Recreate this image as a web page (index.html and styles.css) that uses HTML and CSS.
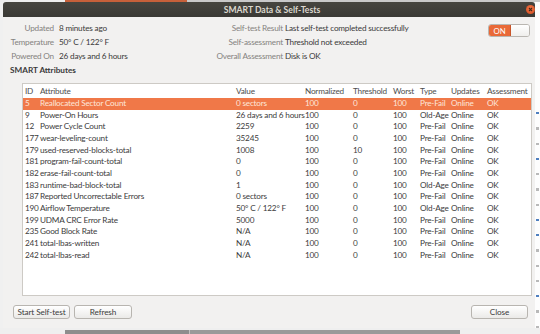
FILE: index.html
```html
<!DOCTYPE html>
<html>
<head>
<meta charset="utf-8">
<link rel="stylesheet" href="styles.css">
</head>
<body>
<div class="screen">
  <div class="top-strip">
    <div class="ts-a"></div><div class="ts-b"></div><div class="ts-c"></div>
  </div>
  <div class="middle">
    <div class="gutter"></div>
    <div class="window">
      <div class="titlebar">
        <span class="title">SMART Data &amp; Self-Tests</span>
        <span class="close-btn"><svg width="9" height="9" viewBox="0 0 9 9"><path d="M3 3L6 6M6 3L3 6" stroke="#4a2a1a" stroke-width="1.1"/></svg></span>
      </div>
      <div class="body">
        <div class="info">
          <div class="info-grid left">
            <span class="lbl">Updated</span><span class="val">8 minutes ago</span>
            <span class="lbl">Temperature</span><span class="val">50° C / 122° F</span>
            <span class="lbl">Powered On</span><span class="val">26 days and 6 hours</span>
          </div>
          <div class="info-grid right">
            <span class="lbl">Self-test Result</span><span class="val">Last self-test completed successfully</span>
            <span class="lbl">Self-assessment</span><span class="val">Threshold not exceeded</span>
            <span class="lbl">Overall Assessment</span><span class="val">Disk is OK</span>
          </div>
          <div class="switch"><span class="on">ON</span><span class="knob"></span></div>
        </div>
        <div class="section">SMART Attributes</div>
        <div class="table-box">
          <table class="attrs">
            <colgroup>
              <col class="c-id"><col class="c-attr"><col class="c-val"><col class="c-norm"><col class="c-thr"><col class="c-worst"><col class="c-type"><col class="c-upd"><col class="c-ass">
            </colgroup>
            <thead>
              <tr><th>ID</th><th>Attribute</th><th>Value</th><th>Normalized</th><th>Threshold</th><th>Worst</th><th>Type</th><th>Updates</th><th>Assessment</th></tr>
            </thead>
            <tbody>
              <tr class="sel"><td>5</td><td>Reallocated Sector Count</td><td>0 sectors</td><td>100</td><td>0</td><td>100</td><td>Pre-Fail</td><td>Online</td><td>OK</td></tr>
              <tr><td>9</td><td>Power-On Hours</td><td>26 days and 6 hours</td><td>100</td><td>0</td><td>100</td><td>Old-Age</td><td>Online</td><td>OK</td></tr>
              <tr><td>12</td><td>Power Cycle Count</td><td>2259</td><td>100</td><td>0</td><td>100</td><td>Pre-Fail</td><td>Online</td><td>OK</td></tr>
              <tr><td>177</td><td>wear-leveling-count</td><td>35245</td><td>100</td><td>0</td><td>100</td><td>Pre-Fail</td><td>Online</td><td>OK</td></tr>
              <tr><td>179</td><td>used-reserved-blocks-total</td><td>1008</td><td>100</td><td>10</td><td>100</td><td>Pre-Fail</td><td>Online</td><td>OK</td></tr>
              <tr><td>181</td><td>program-fail-count-total</td><td>0</td><td>100</td><td>0</td><td>100</td><td>Pre-Fail</td><td>Online</td><td>OK</td></tr>
              <tr><td>182</td><td>erase-fail-count-total</td><td>0</td><td>100</td><td>0</td><td>100</td><td>Pre-Fail</td><td>Online</td><td>OK</td></tr>
              <tr><td>183</td><td>runtime-bad-block-total</td><td>1</td><td>100</td><td>0</td><td>100</td><td>Old-Age</td><td>Online</td><td>OK</td></tr>
              <tr><td>187</td><td>Reported Uncorrectable Errors</td><td>0 sectors</td><td>100</td><td>0</td><td>100</td><td>Pre-Fail</td><td>Online</td><td>OK</td></tr>
              <tr><td>190</td><td>Airflow Temperature</td><td>50° C / 122° F</td><td>100</td><td>0</td><td>100</td><td>Old-Age</td><td>Online</td><td>OK</td></tr>
              <tr><td>199</td><td>UDMA CRC Error Rate</td><td>5000</td><td>100</td><td>0</td><td>100</td><td>Pre-Fail</td><td>Online</td><td>OK</td></tr>
              <tr><td>235</td><td>Good Block Rate</td><td>N/A</td><td>100</td><td>0</td><td>100</td><td>Pre-Fail</td><td>Online</td><td>OK</td></tr>
              <tr><td>241</td><td>total-lbas-written</td><td>N/A</td><td>100</td><td>0</td><td>100</td><td>Pre-Fail</td><td>Online</td><td>OK</td></tr>
              <tr><td>242</td><td>total-lbas-read</td><td>N/A</td><td>100</td><td>0</td><td>100</td><td>Pre-Fail</td><td>Online</td><td>OK</td></tr>
            </tbody>
          </table>
        </div>
        <div class="buttons">
          <button class="btn btn-start">Start Self-test</button>
          <button class="btn btn-refresh">Refresh</button>
          <span class="spacer"></span>
          <button class="btn btn-close">Close</button>
        </div>
      </div>
    </div>
    <div class="side">
      <i class="m b"></i><i class="m"></i><i class="m"></i><i class="m b"></i><i class="m"></i><i class="m"></i><i class="m"></i><i class="m b"></i><i class="m b"></i><i class="m"></i><i class="m"></i><i class="m"></i><i class="m b"></i><i class="m"></i><i class="m"></i>
    </div>
  </div>
  <div class="bottom-strip">
    <div class="bs-a"></div><div class="bs-b"></div><div class="bs-c"></div><div class="bs-d"></div>
  </div>
</div>
</body>
</html>
```
FILE: styles.css
```css
* { box-sizing: border-box; }
html, body { margin: 0; padding: 0; }
body {
  width: 540px;
  height: 334px;
  overflow: hidden;
  background: #f4f4f4;
  font-family: Lato, "Open Sans", "DejaVu Sans", sans-serif;
  font-size: 8.2px;
  letter-spacing: -0.2px;
  color: #3c3c3c;
}
.screen { display: flex; flex-direction: column; width: 540px; height: 334px; }

.top-strip { height: 2px; display: flex; background: #ededed; }
.ts-a { width: 65px; }
.ts-b { width: 122px; background: #c7603a; }
.ts-c { flex: 1; background: #c9c9c9; }

.middle { display: flex; height: 326px; }
.gutter { width: 3px; background: #f0f0f0; }
.window {
  width: 532px;
  display: flex;
  flex-direction: column;
  background: #f2f1f0;
}
.titlebar {
  height: 15px;
  background: linear-gradient(#46453f, #3a3935);
  display: flex;
  align-items: center;
  justify-content: center;
  position: relative;
  border-radius: 3px 3px 0 0;
}
.title {
  color: #dcd8cf;
  font-weight: bold;
  font-size: 8.6px;
  letter-spacing: 0;
  margin-left: 6px;
}
.close-btn {
  position: absolute;
  right: 0px;
  top: 3px;
  width: 9px;
  height: 9px;
  border-radius: 50%;
  background: radial-gradient(circle at 50% 40%, #f2794a, #d4481c);
  display: flex;
}

.body { flex: 1; display: flex; flex-direction: column; padding: 4px 4px 0 7px; }

.info { display: flex; height: 42px; position: relative; }
.info-grid {
  display: grid;
  grid-auto-rows: 14px;
  align-items: center;
}
.info-grid.left { width: 202px; grid-template-columns: 44px auto; column-gap: 5px; }
.info-grid.right { grid-template-columns: 71px auto; column-gap: 2px; }
.lbl { color: #85837f; text-align: right; white-space: nowrap; }
.val { color: #3a3a3a; white-space: nowrap; }

.switch {
  position: absolute;
  right: 1px;
  top: 3px;
  width: 42px;
  height: 13px;
  border: 1px solid #b9b6b1;
  border-radius: 3px;
  display: flex;
  overflow: hidden;
  background: #fbfbfa;
}
.switch .on {
  width: 22px;
  background: #e96937;
  color: #fff;
  font-size: 7.8px;
  letter-spacing: 0;
  display: flex;
  align-items: center;
  justify-content: center;
  border-right: 1px solid #c85529;
}
.switch .knob { flex: 1; background: linear-gradient(#ffffff, #efeeec); }

.section { height: 14px; line-height: 14px; font-weight: bold; color: #3a3a3a; letter-spacing: 0; }

.table-box {
  margin: 6px 0 0 12px;
  width: 510px;
  height: 213px;
  background: #fff;
  border: 1px solid #cdcac5;
  overflow: hidden;
}
.attrs { border-collapse: collapse; table-layout: fixed; width: 508px; }
.c-id { width: 15px; }
.c-attr { width: 196px; }
.c-val { width: 69px; }
.c-norm { width: 48px; }
.c-thr { width: 40px; }
.c-worst { width: 27px; }
.c-type { width: 31px; }
.c-upd { width: 36px; }
.c-ass { width: 46px; }
.attrs th, .attrs td {
  padding: 0 0 0 2px;
  text-align: left;
  white-space: nowrap;
  overflow: visible;
  font-weight: normal;
}
.attrs th { height: 14px; color: #4d4d4d; }
.attrs td { height: 11.67px; line-height: 11.67px; color: #3c3c3c; }
.attrs tr.sel td { background: #f07848; color: #fde6d9; }

.buttons { display: flex; align-items: center; margin-top: 9px; gap: 4px; padding-left: 3px; padding-right: 3px; }
.spacer { flex: 1; }
.btn {
  height: 14px;
  padding: 0;
  font-family: inherit;
  font-size: 8.2px;
  letter-spacing: -0.1px;
  color: #3c3c3c;
  border: 1px solid #b8b5b0;
  border-radius: 3px;
  background: linear-gradient(#ffffff, #ebeae8);
  display: flex;
  align-items: center;
  justify-content: center;
}
.btn-start { width: 57px; }
.btn-refresh { width: 58px; }
.btn-close { width: 57px; }

.side {
  width: 5px;
  background: #fdfdfd;
  display: flex;
  flex-direction: column;
  gap: 13px;
  padding-top: 110px;
  padding-left: 1px;
  overflow: hidden;
}
.side .m { display: block; width: 3px; height: 4px; background: #b9b9b9; }
.side .m.b { background: #4f7fbf; }

.bottom-strip { flex: 1; display: flex; background: #efefef; padding-top: 2px; }
.bs-a { width: 65px; }
.bs-b { width: 124px; background: #8d8d8d; }
.bs-c { width: 271px; background: #9a9a9a; border-left: 1px solid #c0c0c0; }
.bs-d { flex: 1; }
```
